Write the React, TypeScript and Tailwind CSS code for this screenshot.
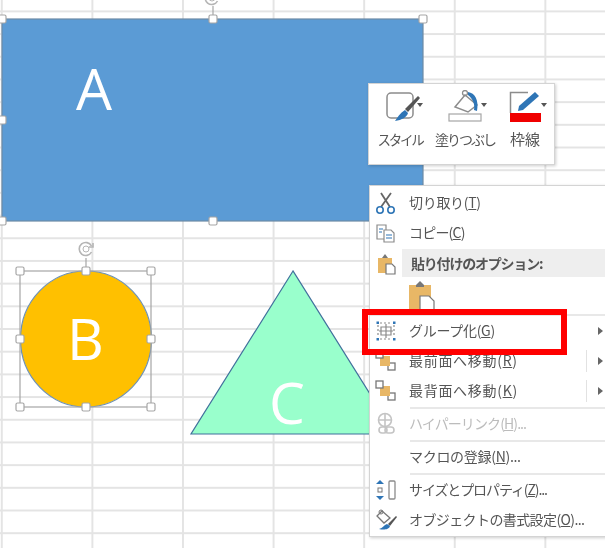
function Handle({ x, y }: { x: number; y: number }) {
  return <rect x={x - 4} y={y - 4} width="8" height="8" rx="1.5" fill="#fff" stroke="#a6a6a6" strokeWidth="1.2" />;
}

function Rotate({ x, y }: { x: number; y: number }) {
  return (
    <g fill="none" stroke="#b5b5b5" strokeWidth="1.6">
      <path d={`M${x + 5.5} ${y + 3}a6.5 6.5 0 1 1 0-6`} />
      <path d={`M${x + 7} ${y - 6}v4h-4`} />
      <circle cx={x} cy={y} r="3" strokeWidth="1" />
    </g>
  );
}

function Canvas() {
  return (
    <svg className="absolute left-0 top-0" width="605" height="548">
      <rect x="2" y="19" width="421" height="202" fill="#5b9bd5" stroke="#6d8aa6" strokeWidth="1.2" />
      <line x1="213" y1="19" x2="213" y2="6" stroke="#a6a6a6" strokeWidth="1.2" />
      <Rotate x={212} y={-2} />
      {[[2, 19], [213, 19], [423, 19], [2, 120], [2, 221], [213, 221], [423, 221]].map(([x, y]) => (
        <Handle key={`${x}-${y}`} x={x} y={y} />
      ))}
      <ellipse cx="86" cy="339" rx="65.5" ry="68" fill="#ffc000" stroke="#6f92b3" strokeWidth="1.2" />
      <rect x="20" y="271" width="131" height="136" fill="none" stroke="#a6a6a6" strokeWidth="1.2" />
      <line x1="86" y1="271" x2="86" y2="258" stroke="#a6a6a6" strokeWidth="1.2" />
      <Rotate x={86} y={249} />
      {[[20, 271], [86, 271], [151, 271], [20, 339], [151, 339], [20, 407], [86, 407], [151, 407]].map(([x, y]) => (
        <Handle key={`${x}-${y}`} x={x} y={y} />
      ))}
      <polygon points="293,271 191,434 395,434" fill="#99ffcc" stroke="#41719c" strokeWidth="1.2" />
    </svg>
  );
}

function Label({ text, className }: { text: string; className: string }) {
  return <div className={`absolute text-white text-[57px] leading-none font-['Open_Sans',sans-serif] ${className}`}>{text}</div>;
}

function ToolIcon({ kind }: { kind: "style" | "fill" | "line" }) {
  if (kind === "style")
    return (
      <svg width="36" height="34" viewBox="0 0 36 34">
        <rect x="2" y="3" width="26" height="25" rx="4" fill="#fff" stroke="#8c8c8c" strokeWidth="1.5" />
        <path d="M33 6l2 2-12 14-3-3z" fill="#555" />
        <path d="M20 20l3 3c-1 4-6 7-13 8 2-3 5-8 10-11z" fill="#2e75b6" />
      </svg>
    );
  if (kind === "fill")
    return (
      <svg width="36" height="34" viewBox="0 0 36 34">
        <path d="M19 5l12 10-9 7-13-5z" fill="#fff" stroke="#8c8c8c" strokeWidth="1.5" />
        <circle cx="19" cy="3" r="2.5" fill="none" stroke="#8c8c8c" strokeWidth="1.3" />
        <path d="M22 2c7 1 11 8 9 19l-3-1c1-6-1-11-6-15z" fill="#2e75b6" />
        <rect x="3" y="24" width="32" height="7" fill="#fff" stroke="#a6a6a6" strokeWidth="1.2" />
      </svg>
    );
  return (
    <svg width="36" height="34" viewBox="0 0 36 34">
      <path d="M20 2.5H2.5V23" fill="none" stroke="#8c8c8c" strokeWidth="1.5" />
      <path d="M27 2l4 4-16 14-5 1 1-5z" fill="#2e75b6" />
      <rect x="2" y="23" width="31" height="9" fill="#f00000" />
    </svg>
  );
}

function MiniToolbar() {
  const tools = [
    { kind: "style" as const, label: "スタイル", col: "w-[62px]", pad: "pl-[8px]", arrow: "left-[39.5px]", text: "text-[13.5px] tracking-[-2.2px]" },
    { kind: "fill" as const, label: "塗りつぶし", col: "w-[68px]", pad: "pl-[4px]", arrow: "left-[38.5px]", text: "text-[14px] tracking-[-2px]" },
    { kind: "line" as const, label: "枠線", col: "w-[52px]", pad: "pl-[6px]", arrow: "left-[38.5px]", text: "text-[15px]" },
  ];
  return (
    <div className="absolute left-[368px] top-[83px] w-[187px] h-[82px] bg-white border border-[#d4d4d4] shadow-[1px_1px_3px_rgba(0,0,0,0.2)] flex pt-[6px]">
      {tools.map((t) => (
        <div key={t.kind} className={`${t.col} flex flex-col items-center`}>
          <div className={`relative w-[46px] h-[34px] ${t.pad}`}>
            <ToolIcon kind={t.kind} />
            <div className={`absolute top-[13px] border-x-[3.5px] border-x-transparent border-t-[4px] border-t-[#555] ${t.arrow}`} />
          </div>
          <div className={`mt-[5px] leading-[20px] text-[#555] whitespace-nowrap ${t.text}`}>{t.label}</div>
        </div>
      ))}
    </div>
  );
}

function MenuIcon({ name }: { name: string }) {
  const s = { width: 26, height: 26, viewBox: "0 0 26 26" };
  switch (name) {
    case "cut":
      return (
        <svg {...s}>
          <path d="M8 3l9 14M18 3L8 17" stroke="#666" strokeWidth="1.8" fill="none" />
          <circle cx="7" cy="20" r="3.2" fill="none" stroke="#2e75b6" strokeWidth="1.6" />
          <circle cx="18" cy="20" r="3.2" fill="none" stroke="#2e75b6" strokeWidth="1.6" />
        </svg>
      );
    case "copy":
      return (
        <svg {...s}>
          <path d="M4 5h9v14H4z" fill="#fff" stroke="#8c8c8c" strokeWidth="1.2" />
          <path d="M11 10h7l3 3v9H11z" fill="#fff" stroke="#8c8c8c" strokeWidth="1.2" />
          <path d="M6 9h4M6 12h3M13 15h6M13 18h6" stroke="#2e75b6" strokeWidth="1.2" />
        </svg>
      );
    case "paste":
      return (
        <svg {...s}>
          <path d="M5 8h14v15H5z" fill="#e8b766" />
          <path d="M9 8l3-4 3 4z" fill="#777" />
          <path d="M13 14h6l3 3v7h-9z" fill="#fff" stroke="#777" strokeWidth="1.2" />
        </svg>
      );
    case "group":
      return (
        <svg {...s}>
          <g stroke="#8c8c8c" strokeWidth="1.2" fill="none">
            <path d="M7 5h12M7 21h12M5 7v12M21 7v12" strokeDasharray="2 2" />
            <path d="M8 9h10v8H8zM13 6v14M6 13h14" />
          </g>
          <g fill="#2e75b6">
            <rect x="3.5" y="3.5" width="2.5" height="2.5" />
            <rect x="20" y="3.5" width="2.5" height="2.5" />
            <rect x="3.5" y="20" width="2.5" height="2.5" />
            <rect x="20" y="20" width="2.5" height="2.5" />
          </g>
        </svg>
      );
    case "front":
      return (
        <svg {...s}>
          <rect x="15" y="15" width="7" height="7" fill="#fff" stroke="#777" strokeWidth="1.3" />
          <rect x="7" y="8" width="10" height="10" fill="#e8b766" />
          <rect x="3" y="3" width="7" height="7" fill="#fff" stroke="#777" strokeWidth="1.3" />
        </svg>
      );
    case "link":
      return (
        <svg {...s}>
          <g fill="none" stroke="#c4c4c4" strokeWidth="1.6">
            <circle cx="12" cy="9" r="6.5" />
            <path d="M6 9h12M12 3v12" />
            <rect x="6" y="16" width="8" height="6" rx="3" />
            <rect x="12" y="16" width="9" height="6" rx="3" />
          </g>
        </svg>
      );
    case "size":
      return (
        <svg {...s}>
          <path d="M7 3l-4 4h8zM7 23l-4-4h8z" fill="#2e75b6" />
          <rect x="5" y="11" width="4" height="4" fill="none" stroke="#777" />
          <rect x="16" y="4" width="6" height="18" rx="1" fill="#fff" stroke="#8c8c8c" strokeWidth="1.3" />
        </svg>
      );
    case "format":
      return (
        <svg {...s}>
          <path d="M9 4l8 7-6 5-7-7z" fill="#fff" stroke="#777" strokeWidth="1.3" />
          <circle cx="8" cy="5" r="2" fill="none" stroke="#777" />
          <path d="M23 9l-8 8 2 2 7-9z" fill="#555" />
          <path d="M14 17c-3 1-4 4-8 5 4 1 10 1 11-3z" fill="#2e75b6" />
        </svg>
      );
    default:
      return null;
  }
}

function Item({ icon, label, k, tail = "", arrow, divider, disabled, track = "tracking-[-0.3px]" }: { icon?: string; label: string; k: string; tail?: string; arrow?: boolean; divider?: boolean; disabled?: boolean; track?: string }) {
  return (
    <div className="h-[30px] flex items-center">
      <div className="w-[39px] pl-[3px] shrink-0 flex">{icon && <MenuIcon name={icon} />}</div>
      <div className={`text-[14px] -translate-y-[1px] whitespace-nowrap ${track} ${disabled ? "text-[#bcbcbc]" : "text-[#555]"}`}>
        {label}(<span className="underline">{k}</span>){tail}
      </div>
      {arrow && (
        <div className="ml-auto flex items-center h-full w-[22px] shrink-0">
          {divider && <div className="w-px h-[22px] bg-[#e2e2e2]" />}
          <div className="ml-auto mr-[5px] border-y-[4px] border-y-transparent border-l-[5px] border-l-[#666]" />
        </div>
      )}
    </div>
  );
}

function Sep() {
  return <div className="ml-[40px] h-[2px] bg-[#e8e8e8] my-[0.5px]" />;
}

function ContextMenu() {
  return (
    <div className="absolute left-[369px] top-[185px] w-[240px] h-[352px] bg-white border border-[#d4d4d4] shadow-[1px_1px_3px_rgba(0,0,0,0.2)] pt-[2px]">
      <Item icon="cut" label="切り取り" k="T" />
      <Item icon="copy" label="コピー" k="C" track="tracking-[-0.8px]" />
      <div className="h-[28px] mt-[1px] flex items-center">
        <div className="w-[32px] pl-[3px] shrink-0"><MenuIcon name="paste" /></div>
        <div className="flex-1 h-full bg-[#eeeeee] flex items-center pl-[9px] text-[14px] font-semibold tracking-[-1.2px] text-[#555] whitespace-nowrap">貼り付けのオプション:</div>
      </div>
      <div className="h-[37px] pl-[37px] pt-[3px]">
        <svg width="30" height="32" viewBox="0 0 30 32">
          <path d="M2 5h22v27H2z" fill="#e8b766" />
          <path d="M9 5l4-4 4 4v2H9z" fill="#777" />
          <path d="M13 16h9l5 5v11H13z" fill="#fff" stroke="#777" strokeWidth="1.2" />
        </svg>
      </div>
      <div className="h-[2px] bg-[#e8e8e8]" />
      <Item icon="group" label="グループ化" k="G" arrow />
      <Item icon="front" label="最前面へ移動" k="R" arrow divider track="tracking-[0.7px]" />
      <Item icon="front" label="最背面へ移動" k="K" arrow divider track="tracking-[0.7px]" />
      <Sep />
      <Item icon="link" label="ハイパーリンク" k="H" tail="..." disabled track="tracking-[-0.9px]" />
      <Sep />
      <Item label="マクロの登録" k="N" tail="..." />
      <Sep />
      <Item icon="size" label="サイズとプロパティ" k="Z" tail="..." track="tracking-[-1.1px]" />
      <Item icon="format" label="オブジェクトの書式設定" k="O" tail="..." track="tracking-[-0.6px]" />
    </div>
  );
}

export default function App() {
  return (
    <div className="relative w-[605px] h-[548px] overflow-hidden bg-white blur-[0.5px] font-['Noto_Sans_CJK_JP','Noto_Sans',sans-serif] bg-[linear-gradient(to_right,#e4e4e4_2px,transparent_2px),linear-gradient(to_bottom,#e4e4e4_2px,transparent_2px)] bg-[length:90.6px_22.7px] bg-[position:0.8px_10.4px]">
      <Canvas />
      <Label text="A" className="left-[76px] top-[60px]" />
      <Label text="B" className="left-[67px] top-[310px]" />
      <Label text="C" className="left-[269px] top-[374px]" />
      <MiniToolbar />
      <ContextMenu />
      <div className="absolute left-[362px] top-[309px] w-[205px] h-[46px] border-[6px] border-[#ff0000]" />
    </div>
  );
}
